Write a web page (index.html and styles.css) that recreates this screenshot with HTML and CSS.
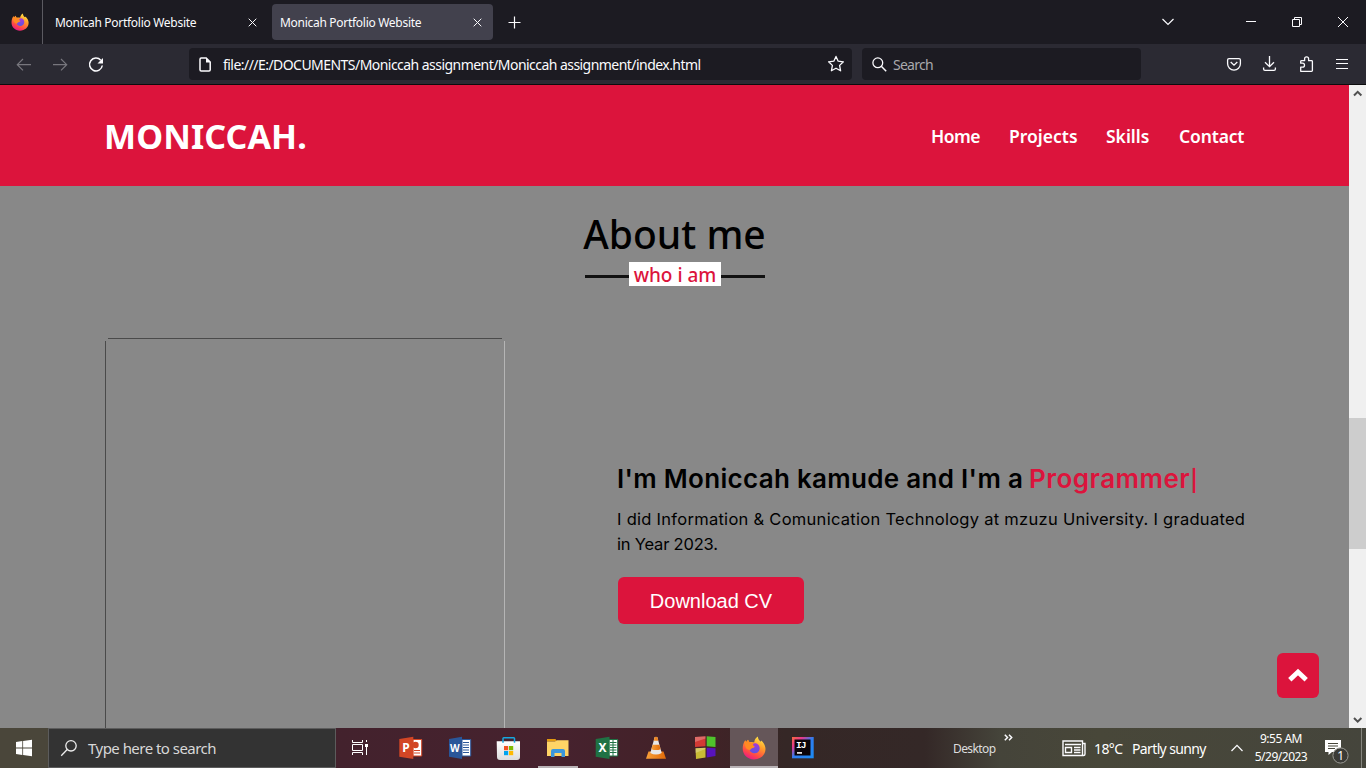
FILE: index.html
```html
<!DOCTYPE html>
<html lang="en">
<head>
<meta charset="utf-8">
<title>Monicah Portfolio Website</title>
<link rel="stylesheet" href="styles.css">
</head>
<body>
<svg width="0" height="0" class="defs">
  <defs>
    <linearGradient id="ffBody" x1="0.8" y1="0" x2="0.3" y2="1"><stop offset="0" stop-color="#fff04a"/><stop offset="0.4" stop-color="#ff9a2a"/><stop offset="0.75" stop-color="#ff4a45"/><stop offset="1" stop-color="#e8168a"/></linearGradient>
    <linearGradient id="ffGlobe" x1="0" y1="0" x2="0" y2="1"><stop offset="0" stop-color="#a838d8"/><stop offset="1" stop-color="#5b54e0"/></linearGradient>
    <linearGradient id="ij" x1="0" y1="0" x2="1" y2="1"><stop offset="0" stop-color="#fb6a3c"/><stop offset="0.25" stop-color="#e5388f"/><stop offset="0.5" stop-color="#2f7df0"/><stop offset="1" stop-color="#1a8cf5"/></linearGradient>
    <linearGradient id="cone" x1="0" y1="0" x2="1" y2="0"><stop offset="0" stop-color="#f9a13a"/><stop offset="1" stop-color="#e06a08"/></linearGradient>
    <linearGradient id="bag" x1="0" y1="0" x2="0" y2="1"><stop offset="0" stop-color="#fff"/><stop offset="1" stop-color="#dcdcdc"/></linearGradient>
    <symbol id="firefox" viewBox="0 0 24 24">
      <path d="M12 23.5C5.500 23.500.700 18.800.700 12.600.700 9.500 1.600 6.500 3.200 4.300L4.200 6.100 6 3.700 7.400 6.200C9 5.700 11 5.800 12.200 6.400 12.400 4 13.600 1.800 15.800.500 16 3.200 17.400 4.500 18.800 5.800L19.200 4.500C22 7 23.500 10 23.500 13 23.500 19 18.300 23.500 12 23.500Z" fill="url(#ffBody)"/>
      <path d="M12.500 7.200C15.500 6.800 18 9.500 17.700 12.700 17.300 16 14.600 17.600 12 17.300 8.700 17 7.200 14.500 7.700 12.600L12 11.200C11 10.500 9.800 10.300 8.700 10 9.500 8.500 10.800 7.500 12.500 7.200Z" fill="url(#ffGlobe)"/>
      <path d="M3.200 4.300 4.200 6.100 6 3.700 7.400 6.200 12.300 7.500C9.500 8.500 12 10 13 10.800 11.500 12 9.500 12 8 14 4 14 2 10 3.200 4.300Z" fill="#ff8a22"/>
    </symbol>
  </defs>
</svg>
<div class="screen">
  <div class="tabbar">
    <div class="view"><svg width="18" height="18"><use href="#firefox"/></svg></div>
    <div class="tab"><span class="tab-title">Monicah Portfolio Website</span><svg class="x" width="9" height="9" viewBox="0 0 9 9"><path d="M.7.700 8.300 8.300M8.300.700.700 8.300"/></svg></div>
    <div class="tab active"><span class="tab-title">Monicah Portfolio Website</span><svg class="x" width="9" height="9" viewBox="0 0 9 9"><path d="M.7.700 8.300 8.300M8.300.700.700 8.300"/></svg></div>
    <svg class="plus" width="13" height="13" viewBox="0 0 13 13"><path d="M6.500 .5V12.500M.5 6.500H12.500"/></svg>
    <svg class="wins" width="206" height="44" viewBox="1160 0 206 44">
      <path d="M1162.500 19 1168 24.500 1173.500 19" stroke-width="1.200"/>
      <path d="M1246 21.500H1256M1292.500 19.500H1299.500V26.500H1292.500ZM1294.500 19.500V17.500H1301.500V24.500H1299.500M1338 17 1348 27M1348 17 1338 27"/>
    </svg>
  </div>
  <div class="toolbar">
    <svg class="nav-icons" width="189" height="40" viewBox="0 44 189 40">
      <path class="dim" d="M31 64.700H17.500M23 59 17.300 64.700 23 70.400M53 64.700H66.500M61 59 66.700 64.700 61 70.400"/>
      <path stroke-width="1.500" d="M100.800 60.300A6.400 6.400 0 1 0 102.300 65.500"/>
      <path class="solid" d="M103 58V63.500H97.500Z"/>
    </svg>
    <div class="url">
      <svg width="12" height="15" viewBox="0 0 12 15"><path stroke-width="1.500" d="M1 2.200Q1 1 2.200 1H7.200L11.200 5V12.800Q11.200 14 10 14H2.200Q1 14 1 12.800Z"/><path class="solid" d="M7 1V5.500H11.500Z"/></svg>
      <span class="address">file:///E:/DOCUMENTS/Moniccah assignment/Moniccah assignment/index.html</span>
      <svg class="star" width="18" height="18" viewBox="0 0 18 18"><path stroke-width="1.300" stroke-linejoin="round" d="M9 1.400 11.200 6.200 16.400 6.800 12.600 10.400 13.600 15.800 9 13.200 4.400 15.800 5.400 10.400 1.600 6.800 6.800 6.200Z"/></svg>
    </div>
    <div class="find">
      <svg width="15" height="15" viewBox="0 0 15 15"><circle cx="5.800" cy="5.800" r="4.900" stroke-width="1.300"/><path stroke-width="1.500" d="M9.300 9.300 14.200 14.200"/></svg>
      <span class="find-text">Search</span>
    </div>
    <svg class="actions" width="150" height="40" viewBox="1216 44 150 40">
      <path stroke-width="1.300" d="M1229 58.700H1239Q1240.400 58.700 1240.400 60.100V63.700A6.400 6.400 0 0 1 1227.600 63.700V60.100Q1227.600 58.700 1229 58.700ZM1230.700 62 1234 65.200 1237.300 62"/>
      <path stroke-width="1.300" d="M1269.500 56V66.500M1265 62.300 1269.500 66.700 1274 62.300M1263.600 67.500V69Q1263.600 70.400 1265 70.400H1274Q1275.400 70.400 1275.400 69V67.500"/>
      <path stroke-width="1.300" stroke-linejoin="round" d="M1300.700 71.300V67.200H1302.500A2 2 0 0 0 1302.500 63.200H1300.700V61.500Q1300.700 60.700 1301.500 60.700H1304.600V58.800A2 2 0 0 1 1308.600 58.800V60.700H1311.500Q1312.400 60.700 1312.400 61.500V70.500Q1312.400 71.300 1311.500 71.300Z"/>
      <path d="M1336 59.500H1348M1336 63.500H1348M1336 68.500H1348" stroke-width="1.200"/>
    </svg>
  </div>
  <div class="viewport">
    <div class="page">
      <header class="site-head">
        <div class="logo">MONICCAH.</div>
        <nav class="menu"><a class="m1">Home</a><a class="m2">Projects</a><a class="m3">Skills</a><a class="m4">Contact</a></nav>
      </header>
      <section class="about">
        <h2 class="title"><span class="title-text">About me</span></h2>
        <div class="rule"><span class="who"><span class="who-text">who i am</span></span></div>
        <div class="cols">
          <div class="photo"></div>
          <div class="bio">
            <div class="lead"><span class="lead-a">I'm Moniccah kamude and I'm a</span><span class="typing">Programmer<span class="cursor">|</span></span></div>
            <p class="text"><span class="line1">I did Information &amp; Comunication Technology at mzuzu University. I graduated</span><br><span class="line2">in Year 2023.</span></p>
            <a class="cv">Download CV</a>
          </div>
        </div>
      </section>
      <div class="up"><svg width="22" height="15" viewBox="0 0 22 15"><path d="M2.800 11.800 11 4 19.200 11.800"/></svg></div>
    </div>
    <div class="scroll">
      <svg width="17" height="17" viewBox="0 0 17 17"><path d="M5 10.500 8.700 6.800 12.400 10.500"/></svg>
      <div class="thumb"></div>
      <svg width="17" height="17" viewBox="0 0 17 17"><path d="M5 7 8.700 10.700 12.400 7"/></svg>
    </div>
  </div>
  <div class="taskbar">
    <svg class="cell" viewBox="0 0 48 40"><path fill="#fff" d="M16 14 22.300 13V19.600H16ZM23.100 12.900 32 11.800V19.600H23.100ZM16 20.400H22.300V27L16 26ZM23.100 20.400H32V28.300L23.100 27.100Z"/></svg>
    <div class="tsearch"><svg width="18" height="18" viewBox="0 0 18 18"><circle cx="11" cy="6.800" r="5.200"/><path d="M7.200 10.500 1.200 16.700"/></svg><span class="tsearch-text">Type here to search</span></div>
    <svg class="cell" viewBox="0 0 48 40"><path fill="none" stroke="#fff" d="M16.500 12V14.500H26.500V12M16.500 27V24.500H26.500V27M16.500 16.500H26.500V22.500H16.500ZM30.500 12V14M30.500 19V27"/><path fill="#fff" d="M29 16H32V19H29Z"/></svg>
    <div class="apps">
      <svg class="cell" viewBox="0 0 48 40"><path fill="#fff" stroke="#d24625" d="M26 11.500H34.700V28H26Z"/><path fill="#d24625" d="M12.300 11 26.300 8.700V31L12.300 28.800Z"/><circle cx="28.500" cy="17" r="3.200" fill="#d24625"/><path stroke="#d24625" d="M27 22.500H33M27 25H33"/><text x="15.200" y="24.300" class="glyph">P</text></svg>
      <svg class="cell" viewBox="0 0 48 40"><path fill="#fff" stroke="#2a5699" d="M26 11.500H34.700V28H26Z"/><path fill="#2a5699" d="M13 11 26 8.700V31L13 28.800Z"/><path stroke="#2a5699" d="M27 14.500H33M27 17H33M27 19.500H33M27 22H33M27 24.500H33"/><text x="14" y="24" class="glyph w">W</text></svg>
      <svg class="cell" viewBox="0 0 48 40"><path d="M11.700 13.300H35V29Q35 32 32 32H15Q12 32 12 29Z" fill="url(#bag)"/><path d="M18 14.700V10.500Q18 9.700 18.800 9.700H28.700Q29.500 9.700 29.500 10.500V14.700" stroke="#16a8e0" stroke-width="1.500" fill="none"/><path fill="#f25022" d="M19 18H23.200V22.200H19Z"/><path fill="#7fba00" d="M24 18H28.200V22.200H24Z"/><path fill="#00a4ef" d="M19 23H23.200V27.200H19Z"/><path fill="#ffb900" d="M24 23H28.200V27.200H24Z"/></svg>
      <svg class="cell" viewBox="0 0 48 40"><path fill="#e39a10" d="M13 11H21.500L23 13.500H13Z"/><path fill="#ffd466" d="M13 13.500 21 13.500 23 12.300H34.500V28H13Z"/><path fill="#3b97dc" d="M17 29V23Q17 21 19 21H29Q31 21 31 23V29H27.500V25H20.500V29Z"/><path fill="#b9b3b6" d="M4 38H44V40H4Z"/></svg>
      <svg class="cell" viewBox="0 0 48 40"><path fill="#fff" stroke="#1f7244" d="M26 11.500H34.700V28H26Z"/><path stroke="#1f7244" d="M27 14.500H33.500M27 17H33.500M27 19.500H33.500M27 22H33.500M27 24.500H33.500M30 12V28"/><path fill="#1f7244" d="M12.700 11 26.500 8.700V31L12.700 28.800Z"/><text x="15.400" y="24.300" class="glyph">X</text></svg>
      <svg class="cell" viewBox="0 0 48 40"><path fill="url(#cone)" d="M16.500 23.500H31.500L34 30.700H14Z"/><path fill="#e8e8e8" d="M22.700 9H25.300L29.700 25Q24 28 18.300 25Z"/><path fill="url(#cone)" d="M22.700 9Q24 8.300 25.300 9L26.300 12.700H21.700ZM20.600 16.800H27.400L28.600 21.200Q24 23 19.400 21.200Z"/></svg>
      <svg class="cell" viewBox="0 0 48 40"><path fill="#d23a34" d="M14 9 24.500 8.300V18.200L14 19Z"/><path fill="#4fc22c" d="M25.700 8.300 34.500 9V19L25.700 18.200Z"/><path fill="#c9bb35" d="M14.500 20.300 24.500 19.700V29.600L15 31Z"/><path fill="#5713bb" d="M25.700 19.700 34.500 20.200V28L25.700 29.500Z"/><path fill="#fff" opacity=".25" d="M14 9 24.500 8.300V10.500L14 14ZM14.500 20.300 24.500 19.700V21L14.500 25Z"/></svg>
      <svg class="cell lit" viewBox="0 0 48 40"><use href="#firefox" x="12" y="8" width="24" height="24"/><path fill="#b9b3b6" d="M0 38H48V40H0Z"/></svg>
      <svg class="cell" viewBox="0 0 48 40"><path fill="url(#ij)" d="M13 9H34.700V30.300H13Z"/><path fill="#0a0408" d="M15.500 11.500H31.500V27.500H15.500Z"/><path fill="#ddd" d="M18 24H23V25.800H18Z"/><text x="17" y="20" class="mono">IJ</text></svg>
    </div>
    <div class="tray">
      <span class="desk">Desktop</span>
      <svg class="more" width="9" height="8" viewBox="0 0 9 8"><path d="M.8.800 3.500 3.500.800 6.200M5 .8 7.700 3.500 5 6.200"/></svg>
      <svg class="news" width="24" height="17" viewBox="0 0 24 17"><path d="M1 1H20.500V15.500H1ZM20.500 3.500H23V14Q23 15.500 21.500 15.500H19M3 4.500H19M3.500 7.500H9.500V12.500H3.500ZM12 7.500H18.500M12 10H18.500M12 12.500H18.500" stroke-width="1.400"/></svg>
      <span class="temp">18°C</span><span class="sky">Partly sunny</span>
      <svg class="caret" width="12" height="8" viewBox="0 0 12 8"><path d="M.5 7 6 1.400 11.500 7"/></svg>
      <div class="clock"><span class="time">9:55 AM</span><span class="date">5/29/2023</span></div>
      <svg class="note" width="26" height="28" viewBox="0 0 26 28"><path fill="#fff" stroke="none" d="M1 3H17V15H8L4.500 18V15H1Z"/><path stroke="#47463b" d="M4 6.500H14M4 9H14M4 11.500H11"/><circle cx="16.500" cy="18.500" r="7.600" fill="#3b3b37" stroke="#9a9a94"/><text x="13.300" y="23" class="badge">1</text></svg>
      <span class="peek"></span>
    </div>
  </div>
</div>
</body>
</html>
```
FILE: styles.css
```css
* { box-sizing: border-box; }
body { margin: 0; background: #000; font-family: "Noto Sans", sans-serif; }
.defs { position: absolute; }
.screen { width: 1366px; height: 768px; overflow: hidden; display: flex; flex-direction: column; }
svg { display: block; flex: none; }
span { white-space: nowrap; }

/* Browser tabs */
.tabbar { height: 44px; flex: none; background: #1c1b22; display: flex; align-items: center; color: #fbfbfe; }
.tabbar svg, .toolbar svg, .tray svg { fill: none; stroke: #fbfbfe; }
.view { width: 43px; height: 44px; border-right: 1px solid #5b5a61; display: flex; align-items: center; padding-left: 11px; }
.view svg { stroke: none; }
.tab { width: 221px; height: 36px; margin-left: 4px; border-radius: 4px; display: flex; align-items: center; justify-content: space-between; padding: 0 11px 0 8px; font-size: 12px; }
.tab + .tab { margin-left: 4px; }
.active { background: #42414d; }
.tab-title { letter-spacing: -0.29px; }
.x { stroke-width: 1; }
.plus { margin-left: 15px; stroke-width: 1.2; }
.wins { margin-left: auto; }

/* Address row */
.toolbar { height: 41px; flex: none; background: #2b2a33; border-bottom: 1px solid #0c0c0d; display: flex; align-items: center; color: #fbfbfe; }
.toolbar .dim { stroke: #77767d; stroke-width: 1.2; }
.toolbar .solid { fill: #fbfbfe; stroke: none; }
.url { width: 663px; height: 32px; border-radius: 4px; background: #1c1b22; display: flex; align-items: center; padding: 0 7px 0 10px; }
.address { margin-left: 12px; font-size: 14px; letter-spacing: -0.545px; }
.star { margin-left: auto; }
.find { width: 279px; height: 32px; margin-left: 10px; border-radius: 4px; background: #1c1b22; display: flex; align-items: center; padding-left: 10px; }
.find-text { margin-left: 6px; font-size: 14px; color: #a9a9ad; letter-spacing: -0.75px; }
.actions { margin-left: auto; }

/* Portfolio page */
.viewport { height: 643px; flex: none; display: flex; }
.page { width: 1349px; background: #888; overflow: hidden; position: relative; }
.site-head { height: 101px; background: #dc143c; color: #fff; display: flex; align-items: center; justify-content: space-between; padding: 0 104px 0 104px; }
.logo { font: 700 34px "Noto Sans", sans-serif; letter-spacing: 0.1px; }
.menu { display: flex; font: 600 17.5px "Noto Sans", sans-serif; letter-spacing: 0; }
.menu a { white-space: nowrap; }
.m1 { width: 78px; letter-spacing: -0.5px; } .m2 { width: 97px; } .m3 { width: 73px; } .m4 { width: 66px; letter-spacing: -0.15px; }
.about { color: #000; padding-top: 20px; }
.title { margin: 0; height: 56px; text-align: center; font: 500 39px/56px "Noto Sans", sans-serif; }
.rule { width: 180px; height: 24px; margin: 0 auto; position: relative; left: 0.5px; display: flex; justify-content: center; background: linear-gradient(#111, #111) 0 13px / 180px 3px no-repeat; }
.who { width: 92px; height: 24px; background: #fff; color: #dc143c; font: 500 19px/27px "Noto Sans", sans-serif; text-align: center; }
.cols { display: flex; padding: 52px 104px 0 105px; justify-content: space-between; }
.photo { width: 400px; height: 400px; background: linear-gradient(#4a4a4a, #4a4a4a) 3px 0 / 394px 1px no-repeat, linear-gradient(#4a4a4a, #4a4a4a) 0 3px / 1px 394px no-repeat, linear-gradient(#b5b5b5, #b5b5b5) 399px 3px / 1px 394px no-repeat; }
.bio { width: 628px; padding-top: 122px; }
.lead { height: 38px; font: 600 26px/37px Inter, sans-serif; white-space: nowrap; display: flex; width: 583px; }
.lead-a { width: 412px; letter-spacing: 0.3px; }
.typing { color: #dc143c; letter-spacing: 0.5px; }
.cursor { display: inline-block; font-size: 21px; letter-spacing: 0; line-height: 30px; }
.text { margin: 9px 0 0; font: 400 16.5px/25px Inter, sans-serif; }
.line1 { letter-spacing: 0.28px; }
.line2 { letter-spacing: -0.2px; }
.cv { display: block; width: 186px; height: 47px; margin: 20px 0 0 1px; border-radius: 6px; background: #dc143c; color: #fff; font: 20px/48px "Liberation Sans", sans-serif; text-align: center; }
.up { position: absolute; left: 1277px; top: 568px; width: 42px; height: 45px; border-radius: 6px; background: #dc143c; display: flex; align-items: center; justify-content: center; }
.up svg { fill: none; stroke: #fff; stroke-width: 4.8; }
.scroll { width: 17px; background: #f0f0f0; display: flex; flex-direction: column; }
.scroll svg { fill: none; stroke: #505050; stroke-width: 2; }
.thumb { height: 131px; background: #cdcdcd; margin: 316px 0 162px; }

/* Desktop taskbar */
.taskbar { height: 40px; flex: none; display: flex; color: #fff; background: linear-gradient(90deg, #4a463a 0 48px, #43222d 336px, #46222e 560px, #422227 700px, #352726 785px, #342827 925px, #45443a 1000px, #484739 1100px, #45453c 1366px); }
.cell { width: 48px; height: 40px; }
.tsearch { width: 288px; background: #333; border: 1px solid #5c5c5c; display: flex; align-items: center; padding-left: 11px; }
.tsearch svg { fill: none; stroke: #eee; stroke-width: 1.3; }
.tsearch-text { margin-left: 10px; font-size: 15px; color: #d8d8d8; letter-spacing: -0.53px; }
.apps { display: flex; gap: 1px; margin-left: 3px; }
.lit { background: #655659; }
.glyph { font: 700 12px "Noto Sans", sans-serif; fill: #fff; }
.w { font-size: 10px; }
.mono { font: 700 9.5px "Liberation Mono", monospace; fill: #fff; letter-spacing: -1px; }
.tray { margin-left: auto; width: 413px; display: flex; align-items: center; }
.desk { width: 51px; font-size: 12px; color: #ddd; letter-spacing: -0.6px; }
.more { margin: 0 49px 20px 0; stroke-width: 1.5 !important; }
.temp { width: 38px; margin-left: 8px; font-size: 14px; letter-spacing: -0.6px; }
.sky { width: 99px; font-size: 14px; letter-spacing: -0.63px; }
.caret { stroke-width: 1.3; }
.clock { width: 76px; margin-left: 0; display: flex; flex-direction: column; align-items: center; font-size: 12px; line-height: 18px; letter-spacing: -0.5px; }
.note { margin-left: 5px; margin-top: 6px; }
.tray .badge { font: 12px "Noto Sans", sans-serif; fill: #fff; stroke: none; }
.peek { width: 1px; height: 40px; margin-left: auto; margin-right: 4px; background: #85857e; }
```
